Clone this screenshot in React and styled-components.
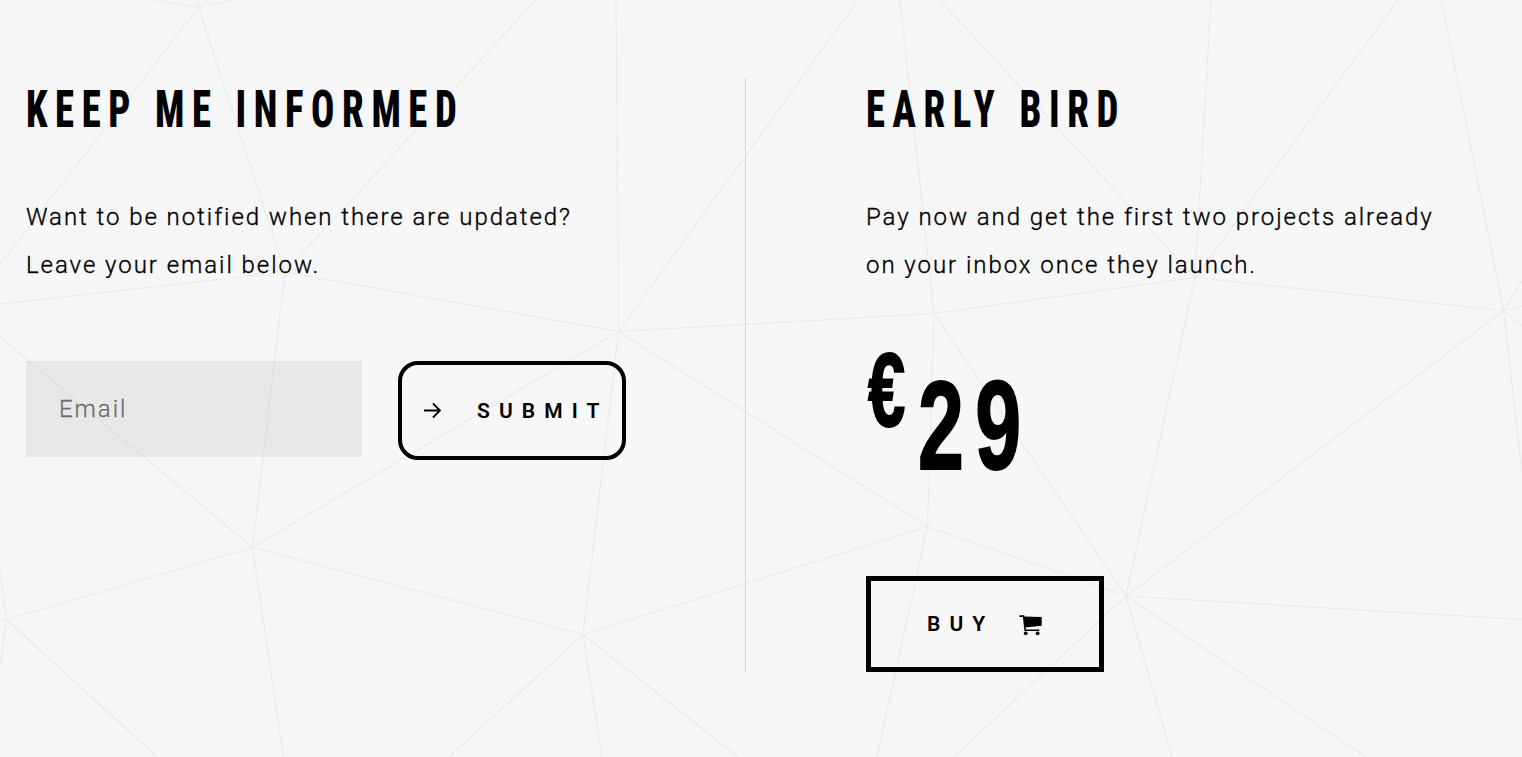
import React, { useState } from 'react';
import styled, { createGlobalStyle } from 'styled-components';

// each entry is a hub followed by the ends of the lines that leave it
const mesh = [
  [198.5, 7.5, [[155, 0], [233, 0], [194, 0], [199, 0], [207, 0], [0, 264], [285, 272]]],
  [285, 272, [[536, 0], [0, 304], [618.5, 331.5], [252.5, 547.5]]],
  [618.5, 331.5, [[616, 0], [858, 0], [934, 313.5], [252.5, 547.5], [583, 634.5], [927.5, 526.5]]],
  [252.5, 547.5, [[0, 337], [6.5, 619.5], [583, 634.5], [283.5, 757]]],
  [6.5, 619.5, [[0, 570], [0, 619.5], [0, 668], [157, 757]]],
  [583, 634.5, [[927.5, 526.5], [449, 757], [602, 757], [738, 757]]],
  [934, 313.5, [[900, 0], [1195, 277.5], [1126, 596], [927.5, 526.5]]],
  [1195, 277.5, [[940, 0], [1211, 0], [1398, 0], [1503.5, 310.5], [1126, 596]]],
  [1503.5, 310.5, [[1441, 0], [1126, 596], [1522, 472], [1522, 281], [1522, 306], [1522, 326]]],
  [927.5, 526.5, [[1126, 596], [877, 757]]],
  [1126, 596, [[1522, 619.5], [1366, 757], [1172, 757], [954, 757]]],
];

export default function App() {
  const [email, setEmail] = useState('');

  return (
    <>
      <GlobalStyle />
      <Page>
        <Mesh viewBox="0 0 1522 757" aria-hidden="true">
          {mesh.map(([x, y, ends]) => ends.map(([ex, ey]) => (
            <line key={`${x}-${ex}-${ey}`} x1={x} y1={y} x2={ex} y2={ey} />
          )))}
        </Mesh>
        <Column divided>
          <Title>KEEP ME INFORMED</Title>
          <Text>
            Want to be notified when there are updated?
            <br />
            Leave your email below.
          </Text>
          <Form onSubmit={e => e.preventDefault()}>
            <Input placeholder="Email" value={email} onChange={e => setEmail(e.target.value)} />
            <SubmitButton type="submit">
              <Arrow viewBox="0 0 17 16">
                <path d="M0 7.5h15.6M8.9 0.4L16 7.5l-7.1 7.1" />
              </Arrow>
              SUBMIT
            </SubmitButton>
          </Form>
        </Column>
        <Column>
          <Title>EARLY BIRD</Title>
          <Text>
            Pay now and get the first two projects already
            <br />
            on your inbox once they launch.
          </Text>
          <Price>
            <Currency>€</Currency>
            <Amount>29</Amount>
          </Price>
          <BuyButton type="button">
            BUY
            <Cart viewBox="0 0 23 21">
              <path d="M4.6 1.6L22.7 2V10.8L6.2 12.4Z" />
              <path className="frame" d="M0.4 1.1H4.6L6.2 15.4M5.6 15.3H20.3" />
              <circle cx="6.7" cy="18.3" r="1.9" />
              <circle cx="18.6" cy="18.3" r="1.9" />
            </Cart>
          </BuyButton>
        </Column>
      </Page>
    </>
  );
}

const GlobalStyle = createGlobalStyle`
  * {
    box-sizing: border-box;
  }

  body {
    margin: 0;
    background: #f7f7f7;
    color: #000;
    font-family: Roboto, sans-serif;
  }
`;

const Page = styled.main`
  position: relative;
  display: grid;
  grid-template-columns: 720px 1fr;
  height: 757px;
  padding: 78px 26px 85px;
  overflow: hidden;
`;

const Mesh = styled.svg`
  position: absolute;
  top: 0;
  left: 0;
  width: 1522px;
  height: 757px;
  stroke: #ebebeb;
  stroke-width: 1.2;
`;

const Column = styled.section.withConfig({ shouldForwardProp: prop => prop !== 'divided' })`
  position: relative;
  display: flex;
  flex-direction: column;
  align-items: flex-start;
  padding-top: 6px;
  padding-left: ${({ divided }) => (divided ? '0' : '120px')};
  border-right: ${({ divided }) => (divided ? '1px solid #d6d6d6' : 'none')};
`;

const Title = styled.h2`
  margin: 0;
  font-size: 52px;
  font-weight: 850;
  font-stretch: 75%;
  line-height: 52px;
  letter-spacing: 10.2px;
  word-spacing: 0.7px;
  white-space: nowrap;
  transform: scaleX(0.745);
  transform-origin: left;
`;

const Text = styled.p`
  margin: 57px 0 0;
  font-size: 24px;
  font-weight: 300;
  line-height: 48px;
  letter-spacing: 1.95px;
  white-space: nowrap;
  -webkit-text-stroke: 0.35px #000;
`;

const Form = styled.form`
  display: flex;
  align-items: flex-start;
  gap: 36px;
  margin-top: 72px;
`;

const Input = styled.input`
  width: 336px;
  height: 96px;
  padding: 0 33px;
  border: none;
  background: rgba(0, 0, 0, 0.06);
  font: 300 24px Roboto, sans-serif;
  letter-spacing: 1.95px;

  &::placeholder {
    color: #6c6c6c;
    -webkit-text-stroke: 0.3px #6c6c6c;
  }
`;

const Button = styled.button`
  display: flex;
  align-items: center;
  background: transparent;
  color: #000;
  font: 600 21px Roboto, sans-serif;
  letter-spacing: 9.1px;
  cursor: pointer;
`;

const SubmitButton = styled(Button)`
  width: 228px;
  height: 99px;
  padding: 0 0 0 22px;
  border: 4px solid #000;
  border-radius: 20px;
`;

const Arrow = styled.svg`
  width: 17px;
  height: 16px;
  margin-right: 36px;
  fill: none;
  stroke: #000;
  stroke-width: 1.9;
`;

const Price = styled.div`
  display: flex;
  align-items: flex-start;
  height: 170px;
  margin-top: 51px;
  padding-left: 2px;
  font-family: 'Liberation Sans', sans-serif;
  font-weight: 700;
  -webkit-text-stroke: 2px #000;
`;

const Currency = styled.span`
  width: 50px;
  margin-top: -1px;
  font-size: 103px;
  line-height: 104px;
  transform: scaleX(0.65);
  transform-origin: left;
`;

const Amount = styled.span`
  margin-top: 23px;
  font-size: 126px;
  line-height: 126px;
  letter-spacing: 17.5px;
  transform: scaleX(0.655);
  transform-origin: left;
`;

const BuyButton = styled(Button)`
  width: 238px;
  height: 96px;
  margin-top: 66px;
  padding: 0 0 0 56px;
  border: 5px solid #000;
`;

const Cart = styled.svg`
  width: 23px;
  height: 21px;
  margin: 2px 0 0 25px;

  .frame {
    fill: none;
    stroke: #000;
    stroke-width: 1.6;
  }
`;
